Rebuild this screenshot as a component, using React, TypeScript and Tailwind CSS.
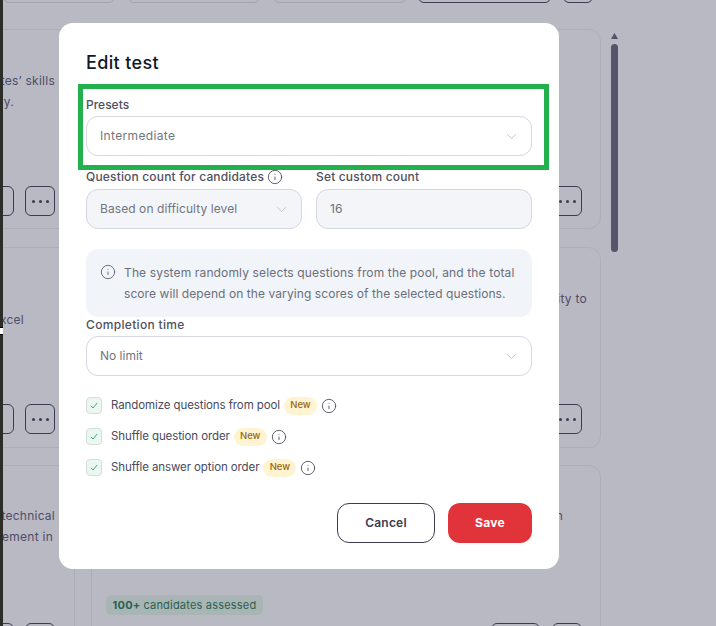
import React from "react";
import { Info } from "lucide-react";

function Chevron() {
  return (
    <svg width="9" height="5" viewBox="0 0 9 5" fill="none" className="shrink-0">
      <path d="M0.3 0.4 L4.5 4.5 L8.7 0.4" stroke="#b5b8c4" strokeWidth="0.8" />
    </svg>
  );
}

function Dots() {
  return (
    <div className="w-[30px] h-[30px] shrink-0 rounded-[6px] border border-[#3b3b52] flex items-center justify-center gap-[4px]">
      <span className="w-[3px] h-[3px] rounded-full bg-[#3b3b52]" />
      <span className="w-[3px] h-[3px] rounded-full bg-[#3b3b52]" />
      <span className="w-[3px] h-[3px] rounded-full bg-[#3b3b52]" />
    </div>
  );
}

function BgLine({ text, pr }: { text: string; pr: string }) {
  return (
    <div className={`h-[21px] flex justify-end whitespace-nowrap text-[12px] leading-[21px] text-[#4d4d69] tracking-[0.25px] ${pr}`}>
      {text}
    </div>
  );
}

function SelectBox({ value, track, disabled }: { value: string; track: string; disabled?: boolean }) {
  return (
    <div
      className={`h-[40px] rounded-[12px] border border-[#d5d8e2] pl-[13px] pr-[15px] flex items-center justify-between text-[12px] text-[#71757f] ${track} ${
        disabled ? "bg-[#f4f5f9]" : "bg-white"
      }`}
    >
      <span>{value}</span>
      <Chevron />
    </div>
  );
}

function Label({ children }: { children: React.ReactNode }) {
  return (
    <div className="h-[14px] mb-[5px] flex items-center gap-[3px] whitespace-nowrap text-[12px] font-medium tracking-[0.17px] text-[#50505f]">
      {children}
    </div>
  );
}

function CheckRow({ label }: { label: string }) {
  return (
    <div className="h-[17px] flex items-center">
      <div className="w-[16px] h-[17px] mr-[9px] rounded-[4px] border border-[#d3dedb] bg-[#edf7f2] flex items-center justify-center">
        <svg width="8" height="7" viewBox="0 0 8 7" fill="none">
          <path d="M0.8 3.8 L3 6 L7.2 1" stroke="#2bb673" strokeWidth="1" />
        </svg>
      </div>
      <span className="text-[11.5px] tracking-[-0.1px] text-[#4a4a5c] whitespace-nowrap">{label}</span>
      <span className="ml-[4px] h-[18px] w-[33px] rounded-full bg-[#fff4d1] text-[#9a6410] text-[9.5px] font-medium flex items-center justify-center">
        New
      </span>
      <Info size={16} strokeWidth={1.3} className="ml-[4px] text-[#4a4a5c]" />
    </div>
  );
}

export default function App() {
  return (
    <div className="relative w-[716px] h-[626px] overflow-hidden flex bg-[#b9b9c3] font-['Inter',sans-serif]">
      <div className="relative w-[3px] shrink-0 bg-[#2c2c28]">
        <div className="absolute left-0 top-[327px] w-[3px] h-[8px] bg-white border-y border-black" />
      </div>

      <div className="w-[598px] shrink-0 flex flex-col overflow-hidden">
        <div className="h-[3px] shrink-0 flex items-end">
          <div className="w-[112px] h-[8px] rounded-b-[6px] border border-[#a3a3af]" />
          <div className="ml-[13px] w-[132px] h-[8px] rounded-b-[6px] border border-[#a3a3af]" />
          <div className="ml-[13px] w-[133px] h-[8px] rounded-b-[6px] border border-[#a3a3af]" />
          <div className="ml-[12px] w-[133px] h-[8px] rounded-b-[6px] border border-[#3b3b52]" />
          <div className="ml-[12px] w-[30px] h-[8px] rounded-b-[6px] border border-[#3b3b52]" />
        </div>

        <div className="mt-[26px] grid grid-cols-[72px_510px] grid-rows-[201px_201px_201px] gap-x-[16px] gap-y-[17px]">
          <div className="h-[200px] pt-[40px] pb-[12px] flex flex-col border-y border-r border-[#aeaeb9] rounded-r-[12px] overflow-hidden">
            <BgLine text="ates’ skills" pr="pr-[19px]" />
            <BgLine text="ry." pr="pr-[60px]" />
            <div className="mt-auto flex justify-end gap-[11px] pr-[19px]">
              <div className="w-[40px] h-[30px] shrink-0 rounded-[6px] border border-[#3b3b52]" />
              <Dots />
            </div>
          </div>
          <div className="h-[200px] pb-[12px] pr-[18px] flex flex-col justify-end border border-[#aeaeb9] rounded-[12px]">
            <div className="flex justify-end gap-[12px]">
              <div className="w-[49px] h-[30px] rounded-[6px] border border-[#3b3b52]" />
              <Dots />
            </div>
          </div>

          <div className="h-[201px] pt-[40px] pb-[13px] flex flex-col border-y border-r border-[#aeaeb9] rounded-r-[12px] overflow-hidden">
            <BgLine text="" pr="pr-[19px]" />
            <BgLine text="xcel" pr="pr-[50px]" />
            <div className="mt-auto flex justify-end gap-[11px] pr-[19px]">
              <div className="w-[40px] h-[30px] shrink-0 rounded-[6px] border border-[#3b3b52]" />
              <Dots />
            </div>
          </div>
          <div className="h-[201px] pt-[40px] pb-[13px] pr-[18px] flex flex-col border border-[#aeaeb9] rounded-[12px]">
            <div className="mr-[-5px]">
              <BgLine text="ity to" pr="pr-0" />
            </div>
            <div className="mt-auto flex justify-end gap-[12px]">
              <div className="w-[49px] h-[30px] rounded-[6px] border border-[#3b3b52]" />
              <Dots />
            </div>
          </div>

          <div className="h-[201px] pt-[39px] pb-[12px] flex flex-col border-y border-r border-[#aeaeb9] rounded-r-[12px] overflow-hidden">
            <BgLine text="technical" pr="pr-[19px]" />
            <BgLine text="ement in" pr="pr-[21px]" />
            <div className="mt-auto flex justify-end gap-[11px] pr-[19px]">
              <div className="w-[40px] h-[30px] shrink-0 rounded-[6px] border border-[#3b3b52]" />
              <Dots />
            </div>
          </div>
          <div className="h-[201px] pt-[39px] pb-[12px] pr-[18px] flex flex-col border border-[#aeaeb9] rounded-[12px]">
            <BgLine text="n" pr="pr-[19px]" />
            <BgLine text="" pr="pr-[19px]" />
            <div className="mt-[48px] ml-[14px] self-start h-[20px] w-[157px] rounded-[5px] bg-[#a9b5b5] flex items-center justify-center whitespace-nowrap text-[11px] tracking-[0.2px] text-[#2a6150]">
              <span className="font-bold mr-[3px]">100+</span> candidates assessed
            </div>
            <div className="mt-auto flex justify-end gap-[12px]">
              <div className="w-[49px] h-[30px] rounded-[6px] border border-[#3b3b52]" />
              <Dots />
            </div>
          </div>
        </div>
      </div>

      <div className="ml-[10px] w-[7px] shrink-0 pt-[33px] flex flex-col">
        <svg width="7" height="6" viewBox="0 0 7 6" className="shrink-0">
          <path d="M3.5 0 L7 6 L0 6 Z" fill="#54546a" />
        </svg>
        <div className="mt-[5px] h-[208px] rounded-full bg-[#54546a]" />
      </div>

      <div className="absolute left-[59px] top-[23px] w-[500px] h-[546px] rounded-[14px] bg-white pt-[26px] pl-[27px] pr-[27px] pb-[26px] flex flex-col">
        <h1 className="h-[28px] mb-[7px] text-[18px] leading-[28px] font-medium tracking-[0.35px] text-[#101828]">Edit test</h1>

        <div className="ml-[-8px] mr-[-17px] border-[5px] border-[#22b14c] pt-[7px] pb-[9px] pl-[3px] pr-[12px]">
          <div className="h-[18px] mb-[2px] flex items-center text-[12px] font-medium text-[#50505f]">Presets</div>
          <SelectBox value="Intermediate" track="tracking-[0.35px]" />
        </div>

        <div className="flex gap-[14px]">
          <div className="w-[216px]">
            <Label>
              Question count for candidates
              <Info size={16} strokeWidth={1.3} className="text-[#4a4a5c]" />
            </Label>
            <SelectBox value="Based on difficulty level" track="tracking-[0.08px]" disabled />
          </div>
          <div className="w-[216px]">
            <Label>Set custom count</Label>
            <div className="h-[40px] rounded-[12px] border border-[#d5d8e2] bg-[#f4f5f9] pl-[13px] flex items-center text-[12px] text-[#6b6f7c]">16</div>
          </div>
        </div>

        <div className="mt-[20px] h-[68px] rounded-[12px] bg-[#f1f4f8] pt-[13px] pl-[14px] flex">
          <Info size={16} strokeWidth={1.3} className="mt-[2px] text-[#5b5f6c] shrink-0" />
          <p className="ml-[8px] text-[12px] leading-[21px] tracking-[0.14px] whitespace-nowrap text-[#6b6f7c]">
            The system randomly selects questions from the pool, and the total
            <br />
            <span className="tracking-[0.08px]">score will depend on the varying scores of the selected questions.</span>
          </p>
        </div>

        <div className="mt-[1px]">
          <div className="h-[14px] mb-[4px] flex items-center text-[12px] font-medium tracking-[0.33px] text-[#50505f]">Completion time</div>
          <SelectBox value="No limit" track="tracking-[0px]" />
        </div>

        <div className="mt-[21px] flex flex-col gap-[14px]">
          <CheckRow label="Randomize questions from pool" />
          <CheckRow label="Shuffle question order" />
          <CheckRow label="Shuffle answer option order" />
        </div>

        <div className="mt-[27px] flex justify-end gap-[13px]">
          <button className="w-[98px] h-[40px] rounded-[12px] border border-[#3b3b52] bg-white text-[12px] font-semibold tracking-[0.2px] text-[#3b3b52]">Cancel</button>
          <button className="w-[84px] h-[40px] rounded-[12px] bg-[#e1343a] text-[12px] font-bold tracking-[0.3px] text-white">Save</button>
        </div>
      </div>
    </div>
  );
}
